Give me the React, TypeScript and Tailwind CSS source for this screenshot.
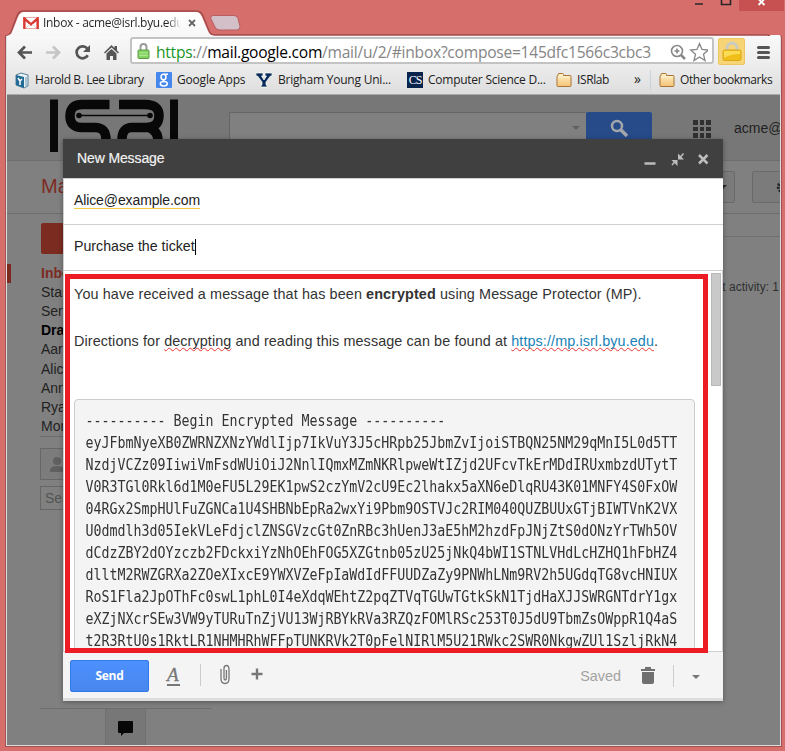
import React from "react";

const cipher = [
  "---------- Begin Encrypted Message ----------",
  "eyJFbmNyeXB0ZWRNZXNzYWdlIjp7IkVuY3J5cHRpb25JbmZvIjoiSTBQN25NM29qMnI5L0d5TT",
  "NzdjVCZz09IiwiVmFsdWUiOiJ2NnlIQmxMZmNKRlpweWtIZjd2UFcvTkErMDdIRUxmbzdUTytT",
  "V0R3TGl0Rkl6d1M0eFU5L29EK1pwS2czYmV2cU9Ec2lhakx5aXN6eDlqRU43K01MNFY4S0FxOW",
  "04RGx2SmpHUlFuZGNCa1U4SHBNbEpRa2wxYi9Pbm9OSTVJc2RIM040QUZBUUxGTjBIWTVnK2VX",
  "U0dmdlh3d05IekVLeFdjclZNSGVzcGt0ZnRBc3hUenJ3aE5hM2hzdFpJNjZtS0dONzYrTWh5OV",
  "dCdzZBY2dOYzczb2FDckxiYzNhOEhFOG5XZGtnb05zU25jNkQ4bWI1STNLVHdLcHZHQ1hFbHZ4",
  "dlltM2RWZGRXa2ZOeXIxcE9YWXVZeFpIaWdIdFFUUDZaZy9PNWhLNm9RV2h5UGdqTG8vcHNIUX",
  "RoS1Fla2JpOThFc0swL1phL0I4eXdqWEhtZ2pqZTVqTGUwTGtkSkN1TjdHaXJJSWRGNTdrY1gx",
  "eXZjNXcrSEw3VW9yTURuTnZjVU13WjRBYkRVa3RZQzFOMlRSc253T0J5dU9TbmZsOWppR1Q4aS",
  "t2R3RtU0s1RktLR1NHMHRhWFFpTUNKRVk2T0pFelNIRlM5U21RWkc2SWR0NkgwZUl1SzljRkN4",
];

const folders = ["Inbox", "Starred", "Sent Mail", "Drafts", "Aaron", "Alice", "Anna", "Ryan", "More"];

function GmailIcon() {
  return (
    <svg width="16" height="12" viewBox="0 0 16 12" className="shrink-0">
      <rect x=".4" y=".4" width="15.200" height="11.200" rx="1" fill="#fff" stroke="#dc8a86" strokeWidth=".8" />
      <path d="M1.400 12V1.500L8 7.500l6.600-6V12" fill="none" stroke="#da3a34" strokeWidth="2.400" />
      <path d="M3 11l4-4M13 11L9 7" stroke="#dcc6c6" strokeWidth=".8" />
    </svg>
  );
}

function Folder() {
  return (
    <svg width="16" height="14" viewBox="0 0 16 14" className="shrink-0">
      <defs>
        <linearGradient id="fold" x2="0" y2="1">
          <stop stopColor="#fff1c9" />
          <stop offset="1" stopColor="#f3c477" />
        </linearGradient>
      </defs>
      <path d="M1 12.500V3.500q0-1 1-1V1.500q0-1 1-1h3.500q1 0 1 1v1H14q1 0 1 1v9q0 1-1 1H2q-1 0-1-1z" fill="url(#fold)" stroke="#a87533" />
      <path d="M2 4h12" fill="none" stroke="#fff6dd" strokeWidth=".8" />
    </svg>
  );
}

function TabStrip() {
  return (
    <div className="relative h-[35px]">
      <svg className="absolute inset-0" width="785" height="36" viewBox="0 0 785 36">
        <defs>
          <linearGradient id="tab" x2="0" y2="1">
            <stop stopColor="#ffffff" />
            <stop offset="1" stopColor="#f7f7f7" />
          </linearGradient>
        </defs>
        <path d="M6 36q4-1 5-4l6-16q2-5 6-5h173q5 0 7 5l6 15q1 4 6 4h552q3 0 3 2" fill="none" stroke="#a54b4b" strokeWidth="1.500" />
        <path d="M6 36q5-1 6-4l6-15q2-5 6-5h172q4 0 6 5l6 14q2 5 7 5z" fill="url(#tab)" />
        <path d="M214 15.500h20q3 0 4 3l2 8q0 3.500-3 3.500h-17q-4 0-5-3l-4-8q-1-3.500 3-3.500z" fill="#d3bfc7" stroke="#b75e62" />
        <path d="M695 4h8M721.500 0v4.500h9V0" fill="none" stroke="#272727" strokeWidth="1.600" />
        <rect x="739" width="45" height="11" fill="#c75050" />
        <path d="M758.500 5l6-6m0 6l-6-6" stroke="#fff" strokeWidth="1.800" />
      </svg>
      <div className="relative top-[11px] flex h-[24px] items-center pl-[23px]">
        <GmailIcon />
        <span className="ml-[4px] w-[138px] overflow-hidden whitespace-nowrap bg-[linear-gradient(90deg,#222_90%,transparent)] bg-clip-text font-['Open_Sans',sans-serif] text-[12px] tracking-[-0.3px] text-transparent">Inbox - acme@isrl.byu.edu</span>
        <svg className="ml-[7px]" width="8" height="8" viewBox="0 0 8 8"><path d="M1 1l6 6m0-6L1 7" stroke="#666" strokeWidth="1.800" /></svg>
      </div>
    </div>
  );
}

function Toolbar() {
  return (
    <div className="flex h-[31px] items-center bg-gradient-to-b from-[#f9f9f9] to-[#ececec]">
      <svg width="123" height="31" viewBox="7 35 123 31" fill="none" stroke="#555" strokeWidth="2.700" className="shrink-0">
        <path d="M32 52.500H19m6-6l-6 6 6 6" />
        <path d="M46 52.500h13m-6-6l6 6-6 6" stroke="#c5c5c5" />
        <path d="M87.500 48.800a6 6 0 1 0 .3 6.500" />
        <path d="M90 45v7h-7z" fill="#555" stroke="none" />
        <path d="M104 52.500l7.500-7.500 3 3v-2h2.500v4.500l2 2-1 1-6.500-6-6.500 6zM106.500 53.500l5-4.500 5 4.500v6.500h-3.500v-4h-3v4h-3.500z" fill="#555" stroke="none" />
      </svg>
      <div className="flex h-[27px] w-[584px] shrink-0 items-center rounded-[3px] border-2 border-[#c3c3c3] bg-white pl-[5px]">
        <svg width="13" height="17" viewBox="0 0 13 17" className="mt-[2px] shrink-0">
          <path d="M3.500 8V4a3 3 0 0 1 6 0v4" fill="none" stroke="#9a9a9a" strokeWidth="2" />
          <rect x="1" y="7" width="11" height="8.500" rx="1" fill="#86d265" stroke="#579c43" />
          <path d="M2 10h9M2 12.500h9" stroke="#aae88b" />
        </svg>
        <span className="mt-[2px] ml-[6px] w-[500px] shrink-0 whitespace-nowrap font-['Open_Sans',sans-serif] text-[15.600px] leading-[22px] tracking-[-0.26px] text-[#858585]"><span className="text-[#209527]">https</span>://<span className="text-black">mail.google.com</span>/mail/u/2/#inbox?compose=145dfc1566c3cbc3</span>
        <svg className="mt-[2px] ml-[12px] shrink-0" width="40" height="20" viewBox="668 42 40 20" fill="none" stroke="#888" strokeWidth="1.600">
          <circle cx="677" cy="51" r="5.500" /><path d="M681 55l4 4" strokeWidth="2.500" /><path d="M674.500 51h5M677 48.500v5" />
          <path d="M699.500 43.500l2.500 6 6.300.5-4.800 4.200 1.500 6.300-5.500-3.500-5.500 3.500 1.500-6.300-4.800-4.200 6.300-.5z" strokeWidth="1.300" />
        </svg>
      </div>
      <div className="mt-[2px] ml-[4px] flex h-[27px] w-[27px] shrink-0 items-center justify-center rounded-[2px] border border-[#ecc75c] bg-[#f7d576]">
        <svg width="20" height="21" viewBox="0 0 20 21">
          <path d="M5 11V7a5 5 0 0 1 10 0v4" fill="none" stroke="#c9cac2" strokeWidth="2.800" />
          <rect x="1" y="9" width="18" height="10.500" rx="1.500" fill="#efbe18" stroke="#d9a71a" />
          <path d="M2 10h16v3q-10 0-16 4z" fill="#ffe365" opacity=".8" />
        </svg>
      </div>
      <div className="mt-[3px] ml-[12px] flex w-[13px] flex-col gap-[2px]"><i className="h-[3px] rounded bg-[#555]" /><i className="h-[3px] rounded bg-[#555]" /><i className="h-[3px] rounded bg-[#555]" /></div>
    </div>
  );
}

function Bookmarks() {
  return (
    <div className="flex h-[29px] items-center whitespace-nowrap border-b border-[#aaa] bg-gradient-to-b from-[#ececec] to-[#dedede] pl-[8px] font-['Open_Sans',sans-serif] text-[12px] text-[#222]">
      <svg width="14" height="17" viewBox="0 0 14 17" className="shrink-0"><path d="M1 3l5-2 7 2v11l-4 2-8-3z" fill="#e8f2f7" stroke="#557f98" /><path d="M1 3l8 2v11l-8-3z" fill="#236b94" /><path d="M3 6l2 3 2-2M5 9v4" stroke="#fff" strokeWidth="1.500" fill="none" /><path d="M11 5v9" stroke="#7499ac" /></svg>
      <span className="ml-[6px] w-[115px] shrink-0 tracking-[-0.4px]">Harold B. Lee Library</span>
      <span className="ml-[6px] flex h-[16px] w-[16px] shrink-0 items-center justify-center rounded-[1px] bg-[#4687ec]">
        <svg width="10" height="14" viewBox="0 0 10 14" fill="none" stroke="#fff" strokeWidth="1.500"><ellipse cx="4.500" cy="4" rx="2.500" ry="2.800" /><path d="M5 1.200h4M5.500 6.500q-2.500 1 0 2.300" /><ellipse cx="4.800" cy="10.800" rx="3.500" ry="2.200" /></svg>
      </span>
      <span className="ml-[5px] w-[75px] shrink-0 tracking-[-0.2px]">Google Apps</span>
      <svg className="ml-[4px] shrink-0" width="16" height="16" viewBox="0 0 16 16"><path d="M0 1h7v3H5.500L8 8l2.500-4H9V1h7v3h-1.500L10 10v3h1v2H5v-2h1v-3L1.500 4H0z" fill="#092b59" stroke="#fff" strokeWidth=".7" /></svg>
      <span className="ml-[6px] w-[119px] shrink-0 tracking-[-0.22px]">Brigham Young Uni...</span>
      <span className="ml-[10px] h-[16px] w-[16px] shrink-0 bg-[#08234c] text-center font-['Liberation_Serif',serif] text-[12px] leading-[16px] tracking-[-1px] text-white">CS</span>
      <span className="ml-[5px] w-[120px] shrink-0 tracking-[-0.25px]">Computer Science D...</span>
      <span className="ml-[8px]"><Folder /></span><span className="ml-[5px] w-[40px] shrink-0 tracking-[-0.4px]">ISRlab</span>
      <span className="mb-[3px] ml-[17px] w-[8px] text-[14px]">»</span>
      <i className="ml-[8px] h-[20px] w-px bg-[#c9d2d8]" />
      <span className="ml-[8px]"><Folder /></span><span className="ml-[5px] tracking-[-0.42px]">Other bookmarks</span>
    </div>
  );
}

function Backdrop() {
  return (
    <div className="flex h-[650px] flex-col overflow-hidden bg-[#808080] text-[14px] text-[#222]">
      <div className="flex h-[66px] shrink-0 border-b border-[#6d6d6d] bg-[#777]">
        <svg className="mt-[4px] ml-[42px] shrink-0" width="130" height="55" viewBox="49 99 130 55" fill="none" stroke="#080808">
          <path d="M54 99.500V152M174 99.500V152" strokeWidth="8" />
          <path d="M109.500 104.500H82q-12 0-12 11.500t12 11.500h13q11 0 11 12v15M119 104.500h26q14 0 14 11 0 12-13 12h-14q-10 0-10 12v15M148 127q10 4 10 13v14" strokeWidth="9.500" />
          <path d="M78 115.500h72" strokeWidth="1.500" /><circle cx="79" cy="115.500" r="2.800" fill="#080808" stroke="none" /><circle cx="150" cy="115.500" r="2.800" fill="#080808" stroke="none" />
        </svg>
        <div className="mt-[17px] ml-[50px] flex h-[34px] w-[357px] shrink-0 justify-end border border-r-0 border-[#656565] bg-[#808080] pt-[13px] pr-[6px]"><i className="h-0 w-0 border-x-4 border-t-4 border-x-transparent border-t-[#606060]" /></div>
        <div className="mt-[17px] flex h-[34px] w-[66px] shrink-0 justify-center rounded-t-[2px] bg-[#274b88] pt-[7px]">
          <svg width="18" height="18" viewBox="0 0 18 18" fill="none" stroke="#a3a7ac"><circle cx="7" cy="7" r="5" strokeWidth="2.500" /><path d="M11 11l6 6" strokeWidth="3.500" /></svg>
        </div>
        <div className="mt-[25px] ml-[41px] grid h-[18px] w-[18px] shrink-0 grid-cols-3 gap-[2px]">{Array.from({ length: 9 }, (_, i) => <i key={i} className="bg-[#303030]" />)}</div>
        <span className="mt-[23px] ml-[23px]">acme@isrl.byu.edu</span>
      </div>
      <div className="flex h-[53px] shrink-0 items-start border-b border-[#6d6d6d]">
        <span className="mt-[12px] ml-[34px] w-[60px] shrink-0 text-[20px] leading-[27px] text-[#7e2b24]">Mail</span>
        <div className="mt-[10px] ml-[564px] flex h-[32px] w-[70px] shrink-0 items-center justify-end rounded-[2px] border border-[#6a6a6a] bg-[#7b7b7b] pr-[7px]"><i className="border-x-4 border-t-4 border-x-transparent border-t-[#2b2b2b]" /></div>
        <div className="mt-[10px] ml-[17px] h-[32px] w-[50px] shrink-0 rounded-[2px] border border-[#6a6a6a] bg-[#7b7b7b] pt-[8px] pl-[23px]"><svg width="14" height="14"><circle cx="7" cy="7" r="4.500" stroke="#262626" strokeWidth="3.500" strokeDasharray="2 1" fill="none" /></svg></div>
      </div>
      <div className="flex min-h-0 flex-1">
        <aside className="w-[205px] shrink-0">
          <div className="mt-[9px] ml-[34px] h-[31px] w-[100px] rounded-[2px] bg-[#7c2b20]" />
          <nav className="mt-[10px]">
            {folders.map((name, i) => <div key={name} className={`flex h-[19.100px] items-center ${i === 0 ? "font-bold text-[#7d2b22]" : i === 3 ? "font-bold text-black" : ""}`}><i className={`mr-[30px] h-[19px] w-[4px] ${i === 0 ? "bg-[#7d2b22]" : ""}`} />{name}</div>)}
          </nav>
          <div className="ml-[33px] border-t border-[#6c6c6c]">
            <div className="mt-[11px] h-[32px] w-[140px] border border-[#666] bg-[#7c7c7c] pt-[8px] pl-[9px]"><svg width="15" height="16" fill="#606060"><circle cx="7" cy="4" r="4" /><path d="M0 15v-3q2-3 7-3t7 3v3z" /></svg></div>
            <div className="mt-[6px] h-[24px] w-[140px] border border-[#666] pl-[4px] leading-[23px] text-[#555]">Search people</div>
            <div className="mt-[198px] h-[35px] border-t border-[#6e6e6e]">
              <div className="ml-[65px] flex h-[36px] w-[41px] justify-center border-x border-[#707070] bg-[#777] pt-[12px]"><svg width="15" height="15"><path d="M1 0h13q1 0 1 1v10q0 1-1 1H6l-3 3v-3H1q-1 0-1-1V1q0-1 1-1z" fill="#080808" /></svg></div>
            </div>
          </div>
        </aside>
        <div className="flex flex-1 flex-col"><div className="h-[23px] border-b border-[#707070]" /><p className="mt-[42px] w-[567px] whitespace-nowrap text-right text-[12px] leading-[16px] text-[#303030]">Last account activity: 1</p></div>
      </div>
    </div>
  );
}

function Compose() {
  return (
    <div className="absolute left-[63px] top-[139px] flex h-[562px] w-[660px] flex-col border-b-[3px] border-[#ddd] bg-white text-[14.400px] text-[#222] shadow-[0_1px_5px_#0005]">
      <header className="flex h-[39px] shrink-0 items-center bg-[#404040] pl-[14px] text-[14px] font-medium text-[#f2f2f2]">
        <span className="w-[504px] tracking-[-0.12px] [-webkit-text-stroke:0.2px_#f2f2f2]">New Message</span>
        <svg width="140" height="39" viewBox="581 139 140 39" fill="none" stroke="#bdbdbd">
          <path d="M644.500 163.500h11" strokeWidth="2.500" />
          <path d="M683.500 153.500l-3.500 4M672 165l3.500-4" strokeWidth="1.500" /><path d="M678 153.500v6h6zM671.500 160h6v6z" fill="#bdbdbd" stroke="none" />
          <path d="M699 155l8.500 8.500m0-8.500l-8.500 8.500" strokeWidth="2.500" />
        </svg>
      </header>
      <div className="flex h-[47px] shrink-0 items-start border-y border-l border-[#cfcfcf] pt-[12px] pl-[10px]"><span className="box-border h-[18px] border-b border-[#f3c844] text-[14px] leading-[18px] tracking-[-0.11px]">Alice@example.com</span></div>
      <div className="flex h-[46px] shrink-0 items-center border-b border-l border-[#cfcfcf] pb-[2px] pl-[10px] text-[14.200px]">Purchase the ticket<i className="h-[16px] w-px bg-black" /></div>
      <div className="flex h-[380px] shrink-0 justify-between overflow-hidden border-x border-[#cfcfcf] pl-[10px]">
        <div className="w-[622px] shrink-0 whitespace-nowrap text-[#333]">
          <p className="mt-[13px] h-[20px] leading-[20px] tracking-[0.11px]"><span>You have received a message that has been <b>encrypted</b> using Message Protector (MP).</span></p>
          <p className="mt-[27px] h-[20px] leading-[20px] tracking-[0.09px]">Directions for <u className="decoration-[#e73535] decoration-wavy decoration-[0.700px] underline-offset-[1px] [text-decoration-skip-ink:none]">decrypting</u> and reading this message can be found at <a className="text-[#1983b7] underline decoration-[#e73535] decoration-wavy decoration-[0.700px] underline-offset-[1px] [text-decoration-skip-ink:none]">https://mp.isrl.byu.edu</a>.</p>
          <pre className="mt-[48px] h-[280px] w-[621px] rounded-[4px] border border-[#ccc] bg-[#f4f4f4] pt-[10px] pl-[10.500px] font-['DejaVu_Sans_Mono',monospace] text-[13.290px] text-[#333]">
            {cipher.map((line) => <div key={line} className="h-[22px] origin-center scale-y-[1.14] leading-[22px]">{line}</div>)}
          </pre>
        </div>
        <i className="mt-[2px] mr-[1px] h-[113px] w-[10px] border border-[#b8b8b8] bg-[#c9c9c9]" />
      </div>
      <footer className="flex flex-1 items-center border-t border-[#cfcfcf] bg-[#f4f4f4] pl-[7px]">
        <button className="mt-[2px] h-[32px] w-[79px] rounded-[2px] border border-[#3079ed] bg-gradient-to-b from-[#4d90fe] to-[#4787ed] font-['Open_Sans',sans-serif] text-[12px] font-bold tracking-[-0.3px] text-white">Send</button>
        <span className="mt-[2px] ml-[18px] h-[20px] w-[13px] border-b-2 border-[#777] font-['Liberation_Serif',serif] text-[19px] italic leading-[18px] text-[#777]"><span className="[-webkit-text-stroke:0.3px_#777]">A</span></span>
        <i className="ml-[20px] h-[22px] w-px bg-[#ccc]" />
        <svg className="ml-[18px]" width="44" height="22" viewBox="219 664 44 22" fill="none" stroke="#777"><path d="M221 669v9.500q0 5 4 5t4-5V669.500q0-4-2.500-4t-2.500 3v9.500q0 2 1.200 2t1.200-2v-8" strokeWidth="1.300" /><path d="M251.500 674h11M257 668.500v11" strokeWidth="2.400" /></svg>
        <span className="mt-[3px] ml-auto text-[14.400px] text-[#a2a2a2]">Saved</span>
        <svg className="mt-[2px] ml-[20px]" width="14" height="18"><path d="M0 2h4V0h6v2h4v2H0zM1 5h12v10q0 2-2 2H3q-2 0-2-2z" fill="#707070" /></svg>
        <i className="mt-[2px] ml-[18px] h-[22px] w-px bg-[#ccc]" />
        <i className="mt-[3px] mr-[23px] ml-[18px] border-x-4 border-t-4 border-x-transparent border-t-[#777]" />
      </footer>
    </div>
  );
}

export default function App() {
  return (
    <div className="relative h-[751px] w-[785px] overflow-hidden bg-[#d66e6c] font-['Liberation_Sans',sans-serif]">
      <TabStrip />
      <div className="ml-[5px] box-border h-[712px] w-[777px] overflow-hidden rounded-tr-[3px] border-x border-b border-[#a54f50]">
        <div className="h-[711px] border-x border-b border-[#ddd]"><Toolbar /><Bookmarks /><Backdrop /></div>
      </div>
      <Compose />
      <div className="pointer-events-none absolute left-[65px] top-[274px] h-[379px] w-[643px] border-[5px] border-[#ed1c24]" />
    </div>
  );
}
